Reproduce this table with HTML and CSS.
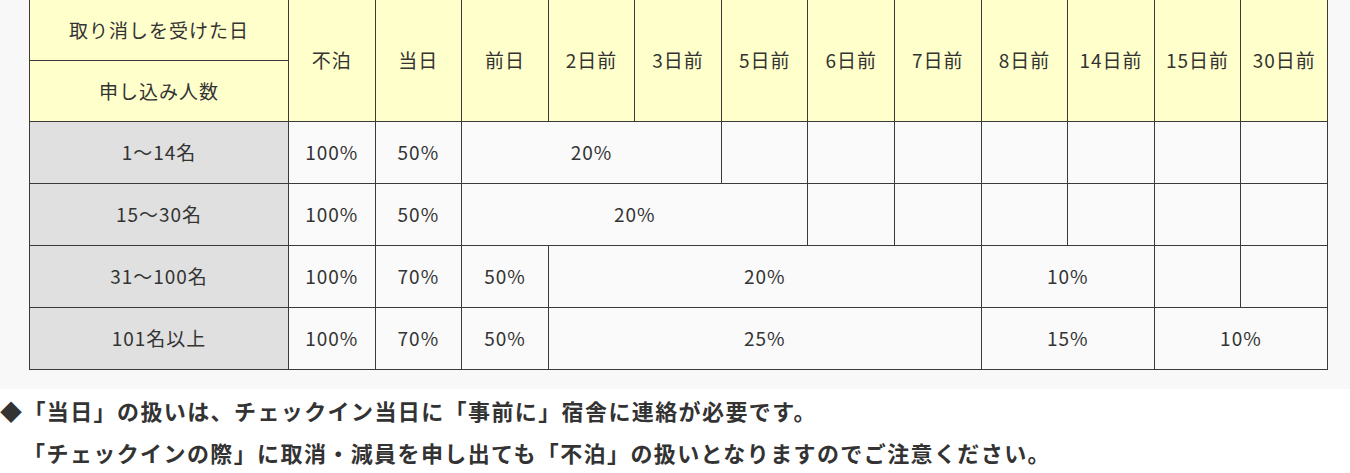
FILE: index.html
```html
<!DOCTYPE html>
<html lang="ja">
<head>
<meta charset="utf-8">
<link rel="stylesheet" href="styles.css">
</head>
<body>
<div class="panel">
  <table class="cancel">
    <colgroup>
      <col class="c-head">
      <col><col><col><col><col><col><col><col><col><col><col><col>
    </colgroup>
    <tr class="hrow">
      <th>取り消しを受けた日</th>
      <th rowspan="2">不泊</th>
      <th rowspan="2">当日</th>
      <th rowspan="2">前日</th>
      <th rowspan="2">2日前</th>
      <th rowspan="2">3日前</th>
      <th rowspan="2">5日前</th>
      <th rowspan="2">6日前</th>
      <th rowspan="2">7日前</th>
      <th rowspan="2">8日前</th>
      <th rowspan="2">14日前</th>
      <th rowspan="2">15日前</th>
      <th rowspan="2">30日前</th>
    </tr>
    <tr class="hrow">
      <th>申し込み人数</th>
    </tr>
    <tr>
      <td class="rh">1〜14名</td>
      <td>100%</td><td>50%</td><td colspan="3">20%</td>
      <td></td><td></td><td></td><td></td><td></td><td></td><td></td>
    </tr>
    <tr>
      <td class="rh">15〜30名</td>
      <td>100%</td><td>50%</td><td colspan="4">20%</td>
      <td></td><td></td><td></td><td></td><td></td><td></td>
    </tr>
    <tr>
      <td class="rh">31〜100名</td>
      <td>100%</td><td>70%</td><td>50%</td><td colspan="5">20%</td><td colspan="2">10%</td>
      <td></td><td></td>
    </tr>
    <tr>
      <td class="rh">101名以上</td>
      <td>100%</td><td>70%</td><td>50%</td><td colspan="5">25%</td><td colspan="2">15%</td><td colspan="2">10%</td>
    </tr>
  </table>
</div>
<div class="notes">
  <p class="note">◆「当日」の扱いは、チェックイン当日に「事前に」宿舎に連絡が必要です。<br>「チェックインの際」に取消・減員を申し出ても「不泊」の扱いとなりますのでご注意ください。</p>
</div>
</body>
</html>
```
FILE: styles.css
```css
html, body {
  margin: 0;
  padding: 0;
  background: #ffffff;
}
body {
  font-family: "Noto Sans CJK JP", "Noto Sans", sans-serif;
  color: #333333;
  overflow: hidden;
}
.panel {
  background: #f8f8f8;
  padding: 0 0 19px 29px;
  margin-top: -1px;
}
.cancel {
  border-collapse: collapse;
  table-layout: fixed;
  width: 1299px;
  font-size: 19px;
  letter-spacing: 1px;
}
.c-head {
  width: 259px;
}
.cancel th,
.cancel td {
  border: 1px solid #3a3a3a;
  text-align: center;
  vertical-align: middle;
  font-weight: normal;
  padding: 0;
  line-height: 1.4;
}
.cancel th {
  background: #ffffcc;
  height: 60px;
}
.cancel td {
  background: #fafafa;
  height: 61px;
}
.cancel td.rh {
  background: #e0e0e0;
}
.notes {
  padding: 0;
}
.note {
  margin: 0;
  font-size: 22px;
  font-weight: bold;
  letter-spacing: 1.4px;
  line-height: 42px;
  padding-left: 1.05em;
  text-indent: -1.05em;
  color: #333333;
}
```
